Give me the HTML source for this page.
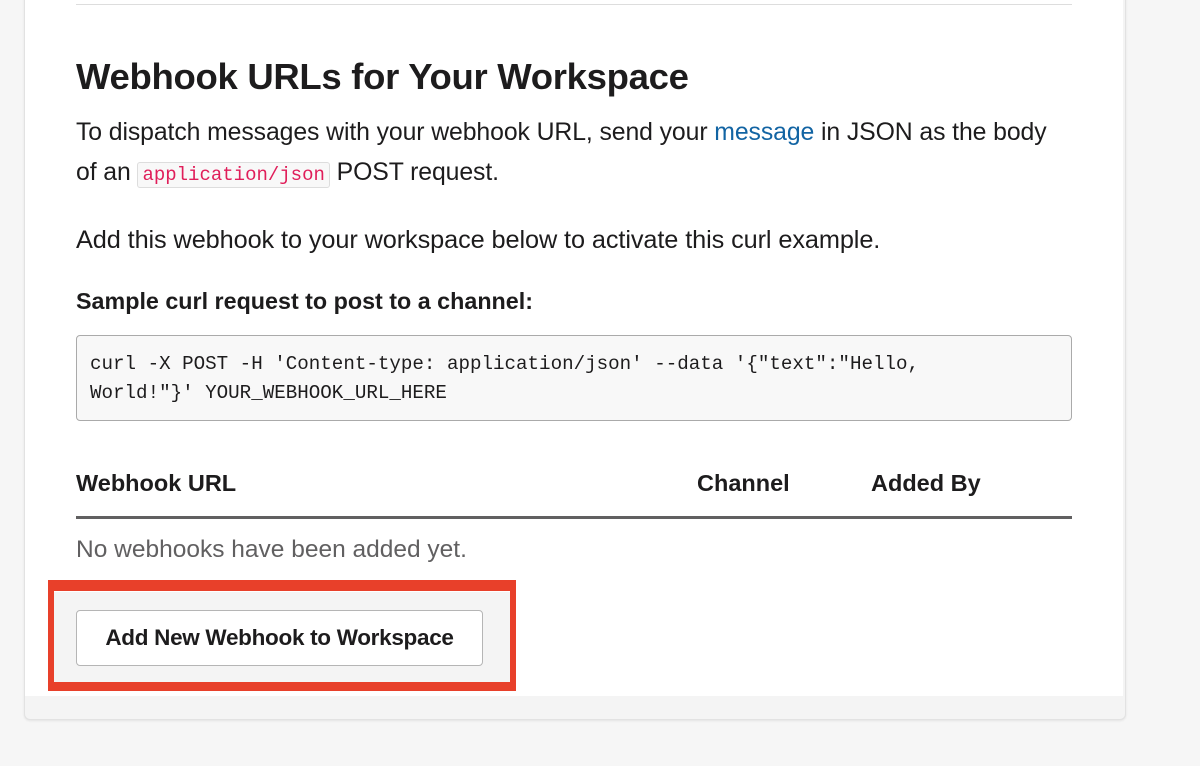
<!DOCTYPE html>
<html><head><style>
body{margin:0;background:#f6f6f6;width:1200px;height:766px;overflow:hidden;font-family:"Liberation Sans",sans-serif;color:#1d1c1d;position:relative}
.card{position:absolute;left:24px;top:-10px;width:1100px;height:728px;background:#f4f4f4;border:1px solid #e2e2e2;border-radius:6px;box-shadow:0 1px 2px rgba(0,0,0,.08)}
.inner{position:absolute;left:25px;top:0;width:1098px;height:696px;background:#fff}
.a{position:absolute;white-space:nowrap}
.topline{position:absolute;left:76px;top:4px;width:996px;height:1px;background:#ddd}
h1{position:absolute;left:76px;top:56px;margin:0;font-size:36.5px;font-weight:bold;letter-spacing:-0.3px;white-space:nowrap}
.p{font-size:24.8px;line-height:38px;left:76px;letter-spacing:-0.1px}
.lnk{color:#1264a3}
code{font-family:"Liberation Mono",monospace;color:#e01e5a;background:#f8f8f8;border:1px solid #ddd;border-radius:3px;font-size:19px;padding:1px 4px;letter-spacing:0}
.pre{position:absolute;left:76px;top:335px;width:996px;height:86px;background:#f8f8f8;border:1px solid #aaa;border-radius:4px;font-family:"Liberation Mono",monospace;font-size:19.2px;line-height:29px;color:#1d1c1d;box-sizing:border-box;padding:14px 0 0 13px;white-space:pre}
.th{font-size:23.5px;font-weight:bold;top:470px}
.rule{position:absolute;left:76px;top:516px;width:996px;height:3px;background:#616061}
.red{position:absolute;left:48px;top:580px;width:468px;height:111px;background:#e8402a}
.redin{position:absolute;left:54px;top:591px;width:456px;height:90px;background:#f4f4f4;border-top:1px solid #fff}
.btn{position:absolute;left:76px;top:610px;width:407px;height:56px;box-sizing:border-box;background:#fff;border:1px solid #b5b5b5;border-radius:4px;font-size:22.5px;font-weight:bold;text-align:center;line-height:54px;letter-spacing:-0.3px}
</style></head><body>
<div class="card"></div>
<div class="inner"></div>
<div class="topline"></div>
<h1>Webhook URLs for Your Workspace</h1>
<div class="a p" style="top:114px">To dispatch messages with your webhook URL, send your <span class="lnk">message</span> in JSON as the body</div>
<div class="a p" style="top:154px">of an <code>application/json</code> POST request.</div>
<div class="a p" style="top:221px;font-size:25.3px">Add this webhook to your workspace below to activate this curl example.</div>
<div class="a" style="left:76px;top:288px;font-size:23.3px;font-weight:bold">Sample curl request to post to a channel:</div>
<div class="pre">curl -X POST -H 'Content-type: application/json' --data '{"text":"Hello,
World!"}' YOUR_WEBHOOK_URL_HERE</div>
<div class="a th" style="left:76px">Webhook URL</div>
<div class="a th" style="left:697px">Channel</div>
<div class="a th" style="left:871px">Added By</div>
<div class="rule"></div>
<div class="a" style="left:76px;top:536px;font-size:24.5px;color:#616061">No webhooks have been added yet.</div>
<div class="red"></div>
<div class="redin"></div>
<div class="btn">Add New Webhook to Workspace</div>
</body></html>
